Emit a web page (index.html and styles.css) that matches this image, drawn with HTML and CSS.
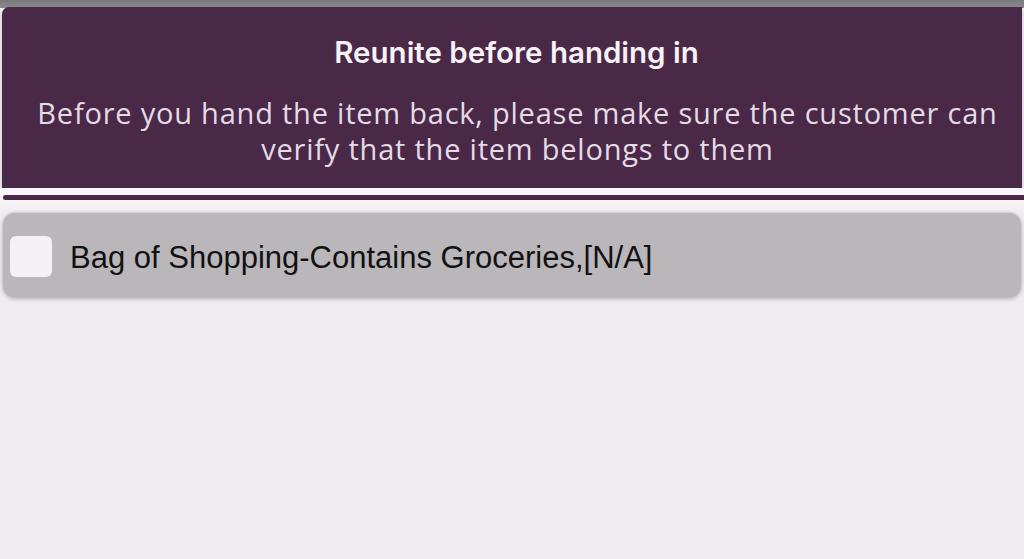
FILE: index.html
```html
<!DOCTYPE html>
<html>
<head>
<meta charset="utf-8">
<link rel="stylesheet" href="styles.css">
</head>
<body>
<div class="topbar"></div>
<div class="screen">
  <header class="banner">
    <h1 class="title">Reunite before handing in</h1>
    <p class="desc">Before you hand the item back, please make sure the customer can verify that the item belongs to them</p>
  </header>
  <div class="gap1"></div>
  <div class="rule"></div>
  <div class="list">
    <label class="item">
      <span class="check"></span>
      <span class="item-text">Bag of Shopping-Contains Groceries,[N/A]</span>
    </label>
  </div>
</div>
</body>
</html>
```

FILE: styles.css
```css
html, body {
  margin: 0;
  padding: 0;
  width: 1024px;
  height: 559px;
  overflow: hidden;
  background: #efedf0;
}
.topbar {
  height: 8px;
  background: linear-gradient(#7a797c, #8a898b);
}
.screen {
  margin-top: -1px;
}
.banner {
  background: #4a2848;
  margin: 0 2px 0 2px;
  border-top-left-radius: 7px;
  border-right: 1px solid #4a2848;
  height: 181px;
  box-sizing: border-box;
  padding-top: 29px;
  text-align: center;
  box-shadow: 0 2px 3px rgba(0,0,0,0.2);
}
.title {
  margin: 0;
  font-family: Inter, "Liberation Sans", sans-serif;
  font-weight: 600;
  font-size: 29.5px;
  line-height: 32px;
  color: #f6f2f6;
  padding-left: 10px;
}
.desc {
  margin: 27px 0 0 0;
  font-family: "Open Sans", "DejaVu Sans", sans-serif;
  font-size: 29px;
  line-height: 36px;
  letter-spacing: 0.78px;
  color: #e4dce4;
  padding: 0 14px 0 26px;
}
.gap1 {
  height: 7px;
  background: #f8f6f9;
}
.rule {
  height: 5px;
  margin-left: 3px;
  background: #4a2848;
  border-radius: 3px 0 0 3px;
}
.list {
  padding-top: 13px;
  background: linear-gradient(#f8f6f9, #efedf0 13px);
}
.item {
  display: flex;
  align-items: center;
  margin: 0 3px;
  height: 84px;
  background: #b9b7ba;
  border-radius: 12px;
  box-shadow: 0 2px 4px rgba(0,0,0,0.25), 0 -1px 3px rgba(0,0,0,0.12);
  padding-left: 7px;
}
.check {
  width: 42px;
  height: 41px;
  background: #f3f1f4;
  border-radius: 6px;
  flex: none;
  margin-top: 3px;
}
.item-text {
  margin-left: 18px;
  font-family: "Liberation Sans", Arial, sans-serif;
  font-size: 31px;
  color: #111;
  margin-top: 5px;
}
```
